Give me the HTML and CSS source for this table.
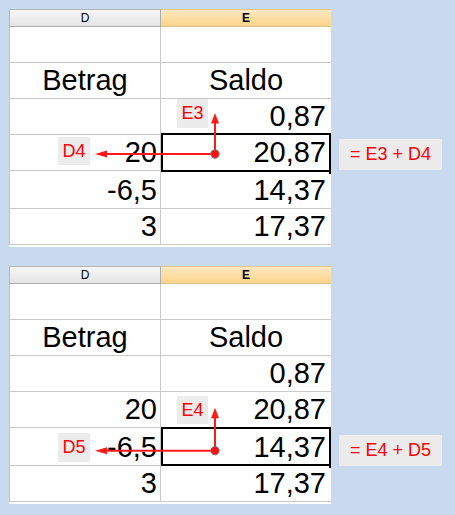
FILE: index.html
```html
<!DOCTYPE html>
<html lang="de">
<head>
<meta charset="utf-8">
<title>Saldo</title>
<link rel="stylesheet" href="styles.css">
</head>
<body>
<div class="stack">
  <div class="block">
    <div class="sheet">
      <div class="h hd">D</div><div class="h he">E</div>
      <div class="c d"></div><div class="c e"></div>
      <div class="c d mid">Betrag</div><div class="c e mid">Saldo</div>
      <div class="c d"></div><div class="c e">0,87</div>
      <div class="c d">20</div><div class="c e">20,87</div>
      <div class="c d tall">-6,5</div><div class="c e tall">14,37</div>
      <div class="c d">3</div><div class="c e">17,37</div>

      <div class="sel sel1"></div>
      <svg class="ov" width="322" height="238" viewBox="0 0 322 238">
        <line x1="206" y1="145" x2="206" y2="113" class="ln"/>
        <polygon points="206,104 202,114.5 210,114.5" class="hd-ar"/>
        <line x1="206" y1="145" x2="96" y2="145" class="ln"/>
        <polygon points="86,145 98,141.5 98,148.5" class="hd-ar"/>
        <circle cx="206" cy="145" r="4.2" class="dot"/>
      </svg>
      <div class="lab lab-e1">E3</div>
      <div class="lab lab-d1">D4</div>
    </div>
    <div class="formula f1">= E3 + D4</div>
  </div>

  <div class="block">
    <div class="sheet">
      <div class="h hd">D</div><div class="h he">E</div>
      <div class="c d"></div><div class="c e"></div>
      <div class="c d mid">Betrag</div><div class="c e mid">Saldo</div>
      <div class="c d"></div><div class="c e">0,87</div>
      <div class="c d">20</div><div class="c e">20,87</div>
      <div class="c d tall">-6,5</div><div class="c e tall">14,37</div>
      <div class="c d">3</div><div class="c e">17,37</div>

      <div class="sel sel2"></div>
      <svg class="ov" width="322" height="238" viewBox="0 0 322 238">
        <line x1="206" y1="184.7" x2="206" y2="151" class="ln"/>
        <polygon points="206,141.7 202,152.2 210,152.2" class="hd-ar"/>
        <line x1="206" y1="184.7" x2="96" y2="184.7" class="ln"/>
        <polygon points="86,184.7 98,181.2 98,188.2" class="hd-ar"/>
        <circle cx="206" cy="184.7" r="4.2" class="dot"/>
      </svg>
      <div class="lab lab-e2">E4</div>
      <div class="lab lab-d2">D5</div>
    </div>
    <div class="formula f2">= E4 + D5</div>
  </div>
</div>
</body>
</html>
```

FILE: styles.css
```css
html, body {
  margin: 0;
  height: 100%;
}
body {
  padding: 9px;
  box-sizing: border-box;
  background: #c9daee;
  font-family: "Liberation Sans", Arial, sans-serif;
  color: #000;
}
.stack {
  display: flex;
  flex-direction: column;
  gap: 19px;
}
.block {
  display: flex;
  align-items: flex-start;
}
.sheet {
  position: relative;
  width: 322px;
  display: grid;
  grid-template-columns: 152px 170px;
  background: #fff;
  padding-bottom: 2px;
}
.h {
  height: 16px;
  line-height: 17px;
  font-size: 12px;
  text-align: center;
  border-top: 1px solid #b4b4b4;
  border-bottom: 1px solid #acacac;
}
.hd {
  border-left: 1px solid #b4b4b4;
  border-right: 1px solid #acacac;
  background: linear-gradient(#f6f6f6, #ececec 60%, #e4e4e4);
}
.he {
  font-weight: bold;
  background: linear-gradient(#fee8c0, #fddc9f 60%, #fbd48d);
  border-top-color: #e0c890;
  border-bottom-color: #dcc08a;
}
.c {
  height: 35px;
  line-height: 35px;
  font-size: 29px;
  text-align: right;
  border-bottom: 1px solid #c9c9c9;
  white-space: nowrap;
}
.c.tall {
  height: 37px;
  line-height: 38px;
}
.d {
  border-left: 1px solid #c2c2c2;
  border-right: 1px solid #c9c9c9;
  padding-right: 3px;
}
.e {
  padding-right: 5px;
}
.c.mid {
  text-align: center;
  padding-right: 0;
}
.sel {
  position: absolute;
  left: 152px;
  width: 170px;
  height: 39px;
  box-sizing: border-box;
  border: 2px solid #000;
}
.sel::after {
  content: "";
  position: absolute;
  right: -2px;
  bottom: -4px;
  width: 2px;
  height: 3px;
  background: #000;
}
.sel1 { top: 124px; }
.sel2 { top: 161px; }
.ov {
  position: absolute;
  left: 0;
  top: 0;
  overflow: visible;
}
.ln {
  stroke: #ff1a1a;
  stroke-width: 2;
}
.hd-ar {
  fill: #ff1a1a;
}
.dot {
  fill: #ff1010;
  stroke: #7a7a7a;
  stroke-width: 1;
}
.lab {
  position: absolute;
  width: 31px;
  height: 29px;
  background: #ececec;
  color: #ff0000;
  font-size: 18px;
  line-height: 29px;
  text-align: center;
}
.lab-e1 { left: 168px; top: 90px; }
.lab-d1 { left: 49px; top: 128px; width: 32px; height: 28px; line-height: 28px; }
.lab-e2 { left: 168px; top: 130px; height: 28px; line-height: 28px; }
.lab-d2 { left: 49px; top: 167px; width: 32px; }
.formula {
  margin-left: 8px;
  width: 103px;
  height: 31px;
  line-height: 31px;
  background: #ececec;
  color: #ff0000;
  font-size: 18px;
  text-align: center;
}
.f1 { margin-top: 130px; }
.f2 { margin-top: 169px; }
```
